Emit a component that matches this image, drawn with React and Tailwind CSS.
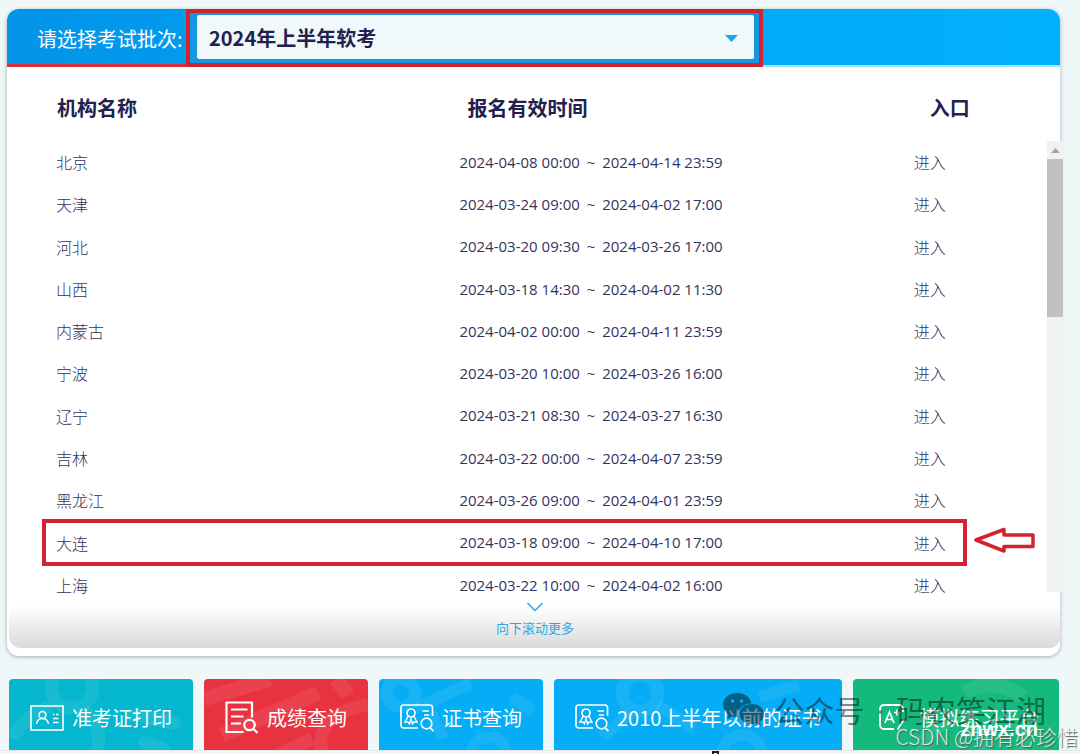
import React, { useState } from 'react';

const BATCHES = ['2024年上半年软考'];

const ROWS = [
  { name: '北京', start: '2024-04-08 00:00', end: '2024-04-14 23:59' },
  { name: '天津', start: '2024-03-24 09:00', end: '2024-04-02 17:00' },
  { name: '河北', start: '2024-03-20 09:30', end: '2024-03-26 17:00' },
  { name: '山西', start: '2024-03-18 14:30', end: '2024-04-02 11:30' },
  { name: '内蒙古', start: '2024-04-02 00:00', end: '2024-04-11 23:59' },
  { name: '宁波', start: '2024-03-20 10:00', end: '2024-03-26 16:00' },
  { name: '辽宁', start: '2024-03-21 08:30', end: '2024-03-27 16:30' },
  { name: '吉林', start: '2024-03-22 00:00', end: '2024-04-07 23:59' },
  { name: '黑龙江', start: '2024-03-26 09:00', end: '2024-04-01 23:59' },
  { name: '大连', start: '2024-03-18 09:00', end: '2024-04-10 17:00', marked: true },
  { name: '上海', start: '2024-03-22 10:00', end: '2024-04-02 16:00' },
];

// --- ICONS ---
const IdCardIcon = () => (
  <svg width="34" height="26" viewBox="0 0 34 26" fill="none" stroke="currentColor" className="shrink-0">
    <rect x="1" y="1" width="32" height="24" strokeWidth="1.6" />
    <circle cx="12.5" cy="10" r="3.4" strokeWidth="1.5" />
    <path d="M6.5 19c.6-3.6 2.6-5.6 6-5.6s5.4 2 6 5.6" strokeWidth="1.5" />
    <path d="M23 9.500h1.500M26 9.500h2.500M23 13.500h5.500M23 17.500h5.500" strokeWidth="1.5" />
  </svg>
);

const ScoreIcon = () => (
  <svg width="34" height="33" viewBox="0 0 34 33" fill="none" stroke="currentColor" strokeWidth="2.2" className="shrink-0">
    <path d="M27 16.500V1.500H1.500v29.500h17" />
    <path d="M6 8.500h16.500M6 15.500h12.500M6 22.500h10" />
    <circle cx="24.5" cy="24" r="5.2" />
    <path d="M28.300 27.700 32.500 32" />
  </svg>
);

const CertIcon = () => (
  <svg width="34" height="28" viewBox="0 0 34 28" fill="none" stroke="currentColor" strokeWidth="1.7" className="shrink-0">
    <path d="M32.500 12V3.500a2.500 2.500 0 0 0-2.500-2.500H3.500A2.500 2.500 0 0 0 1 3.500v18A2.500 2.500 0 0 0 3.500 24H18" />
    <circle cx="11" cy="9" r="4" />
    <path d="M8.200 12 5 18.200l3-.3 1.500 2 1.500-5 1.600 5 1.400-2 3 .3-3.200-6.200" strokeWidth="1.4" />
    <path d="M22.500 7h6.500M24 11h5" strokeWidth="1.4" />
    <circle cx="26.5" cy="19.5" r="5.3" />
    <path d="m30 23.500 3.400 3.700" />
  </svg>
);

const PracticeIcon = () => (
  <svg width="32" height="27" viewBox="0 0 32 27" fill="none" stroke="currentColor" strokeWidth="1.8" className="shrink-0">
    <path d="M24 8V5a4 4 0 0 0-4-4H5a4 4 0 0 0-4 4v16a4 4 0 0 0 4 4h10" />
    <path d="m6 19 4.500-11L15 19M7.500 15.500h6M18 5.500v6M15 8.500h6" strokeWidth="1.7" />
    <path d="m18.500 25.500 6.500-10" />
  </svg>
);

const WechatIcon = () => (
  <svg width="43" height="36" viewBox="0 0 43 36" className="shrink-0">
    <path fill="currentColor" d="M15 1C7 1 1 6 1 13c0 4 2 7 5.500 9.500L5 27l5.500-2.500c2 .6 3.500.7 5.500.7C15 17 21 11.500 29.500 11.500 28 5 22 1 15 1Z" />
    <path fill="currentColor" d="M42 22c0-6-5.500-10-12-10s-12.500 4-12.500 10S23 32 30 32c1.500 0 3-.2 4.300-.6L39 34l-1.200-4.200C40.500 28 42 25.300 42 22Z" />
    <g fill="#1fa6e8">
      <circle cx="10.5" cy="9" r="1.8" />
      <circle cx="19.5" cy="9" r="1.8" />
      <circle cx="26" cy="19" r="1.5" />
      <circle cx="34" cy="19" r="1.5" />
    </g>
  </svg>
);

const SHORTCUTS = [
  {
    label: '准考证打印', Icon: IdCardIcon, box: 'bg-[#05b7ce] px-[21px]',
    art: <><circle cx="63" cy="8" r="21" strokeWidth="13" /><path d="M74 32c16 10 18 24 14 42M42 26C20 36 10 46 4 60" strokeWidth="13" /><path d="M125 36l40 8M136 64l18 6" strokeWidth="14" strokeLinecap="round" /></>,
  },
  {
    label: '成绩查询', Icon: ScoreIcon, box: 'bg-[#e8323f] px-[21px]',
    art: <><path d="M0 20 66 0M18 56l96-42M132 0l12 16" strokeWidth="15" /><path d="M118 74c-6-26 10-42 46-48M74 76l34-16" strokeWidth="13" /></>,
  },
  {
    label: '证书查询', Icon: CertIcon, box: 'bg-[#04adf5] px-[21px]',
    art: <><circle cx="22" cy="14" r="14" strokeWidth="12" /><path d="M36 30 92 4M52 34l12 26M132 18l22 14" strokeWidth="12" /><circle cx="110" cy="76" r="18" strokeWidth="11" /></>,
  },
  {
    label: '2010上半年以前的证书', Icon: CertIcon, box: 'bg-[#04adf5] px-[21px]',
    art: <><circle cx="86" cy="14" r="18" strokeWidth="13" /><path d="M48 58 76 34M104 26l36 24M205 18l40-12" strokeWidth="12" /><circle cx="188" cy="76" r="20" strokeWidth="12" /></>,
  },
  {
    label: '模拟练习平台', Icon: PracticeIcon, box: 'grow bg-[#13b97d] pl-[26px] pr-4',
    art: <><path d="M112 14c20-14 42-8 58 4M70 74c2-26 26-40 54-34" strokeWidth="15" /><circle cx="150" cy="62" r="20" strokeWidth="12" /></>,
  },
];

const BatchBar = () => {
  const [batch, setBatch] = useState(BATCHES[0]);
  return (
    <div className="flex h-[58px] rounded-t-xl bg-linear-to-r from-[#0294e8] via-[#02a6f7] to-[#01b1ff] border-b-2 border-[#a5e2ff]">
      <label htmlFor="batch" className="w-[179px] h-[58px] shrink-0 whitespace-nowrap pl-[30px] text-xl leading-[60px] text-white rounded-tl-xl border-b-[3px] border-[#d92b3a]">
        请选择考试批次:
      </label>
      <div className="relative w-[577px] h-[58px] border-4 border-[#d4232f] bg-[#1297e0] pl-[7px] pr-[5px] pt-0.5 pb-1">
        <select
          id="batch"
          value={batch}
          onChange={(e) => setBatch(e.target.value)}
          className="appearance-none block w-full h-full rounded-xs bg-[#f0f8fb] pl-3 pr-10 pt-0.5 text-xl font-bold text-[#22204d] outline-none"
        >
          {BATCHES.map((b) => <option key={b} value={b}>{b}</option>)}
        </select>
        <svg width="13" height="7" viewBox="0 0 13 7" className="absolute right-[21px] top-[22px] pointer-events-none">
          <path d="M0 0h13L6.500 7z" fill="#1ba5ec" />
        </svg>
      </div>
    </div>
  );
};

const OrgTable = () => (
  <table className="flex-1 table-fixed text-left text-base text-[#35325c]">
    <thead>
      <tr className="h-[74px] text-xl text-[#22204d]">
        <th className="w-[43.5%] pt-2 pl-[50px] font-bold">机构名称</th>
        <th className="w-[43.7%] pt-2 pl-2 font-bold">报名有效时间</th>
        <th className="pt-2 pl-4 font-bold">入口</th>
      </tr>
    </thead>
    <tbody>
      {ROWS.map((row) => (
        <tr key={row.name} className="relative">
          <td className="pl-[49px] font-light">{row.name}</td>
          <td className="font-['Open_Sans'] text-[15px] whitespace-nowrap">
            {row.start}<span className="px-[3px]"> ~ </span>{row.end}
          </td>
          <td className="font-light">
            <a href="#enter">进入</a>
            {row.marked && <span className="absolute -inset-y-0.5 left-[35px] right-20 border-4 border-[#d4232f]" />}
            {row.marked && (
              <svg width="62" height="26" viewBox="0 0 62 26" className="absolute top-1.5 right-3">
                <path d="M3 13 31 2.500V8H60v11.500H31v4.500z" fill="none" stroke="#d4232f" strokeWidth="3.5" strokeLinejoin="round" />
              </svg>
            )}
          </td>
        </tr>
      ))}
    </tbody>
  </table>
);

const ScrollBar = () => (
  <div className="w-4 shrink-0 mt-[74px] mb-3.5 -mr-[3px] bg-[#f0f1f1] flex flex-col items-center">
    <svg width="17" height="18" viewBox="0 0 17 18"><path d="M4 12h9L8.500 7z" fill="#a3a3a3" /></svg>
    <div className="w-full h-[158px] bg-[#c1c1c1]" />
  </div>
);

const Watermark = () => (
  <div className="absolute inset-0 pointer-events-none whitespace-nowrap">
    <div className="absolute right-[34px] top-2.5 flex items-center gap-2.5 text-[30px] leading-10 text-black/45">
      <WechatIcon />
      <span>公众号<span className="px-1 font-['Open_Sans']"> · </span>码农笑江湖</span>
    </div>
    <span className="absolute right-0.5 top-[42px] text-[21px] leading-[30px] font-light text-white/80 [text-shadow:1px_1px_1px_#555]">CSDN @拥有必珍惜</span>
    <span className="absolute right-[42px] top-[38px] font-['Liberation_Sans'] text-xl leading-6 font-bold text-white">znwx.cn</span>
  </div>
);

const App = () => (
  <div className="min-h-screen overflow-hidden bg-[#eff7f9] pt-[9px] font-['Noto_Sans_CJK_SC',sans-serif]">
    <main className="ml-[7px] mr-5 rounded-xl bg-white shadow-[0_1px_4px_#9fb0b0] pb-2">
      <BatchBar />
      <div className="flex h-[539px]">
        <OrgTable />
        <ScrollBar />
      </div>
      <div className="relative ml-0.5 -mr-px -mt-3.5 h-14 rounded-b-xl bg-linear-to-b from-transparent from-25% to-[#dadada] flex flex-col items-center text-[13px] leading-5 text-[#2aa7e6]">
        <svg width="18" height="10" viewBox="0 0 18 10" fill="none" stroke="currentColor" strokeWidth="1.5" className="mt-2.5 mb-1.5"><path d="m1.500 1 7.500 7.500L16.500 1" /></svg>
        向下滚动更多
      </div>
    </main>

    <div className="relative mt-[23px]">
      <nav className="flex gap-[11px] ml-[9px] mr-[21px]">
        {SHORTCUTS.map(({ label, Icon, box, art }) => (
          <a key={label} href="#go" className={`relative shrink-0 h-[71px] overflow-hidden rounded-t-sm flex items-center gap-2 pt-1.5 whitespace-nowrap text-xl text-white ${box}`}>
            <svg className="absolute inset-0 w-full h-full" fill="none" stroke="#ffffff" strokeOpacity="0.08">{art}</svg>
            <Icon />
            <span className="relative">{label}</span>
          </a>
        ))}
      </nav>
      <div className="h-10 bg-[#f4f5f5] border-t border-[#e6e9e9]">
        <div className="ml-[712px] w-[7px] h-2 border-2 border-[#222]" />
      </div>
      <Watermark />
    </div>
  </div>
);

export default App;
